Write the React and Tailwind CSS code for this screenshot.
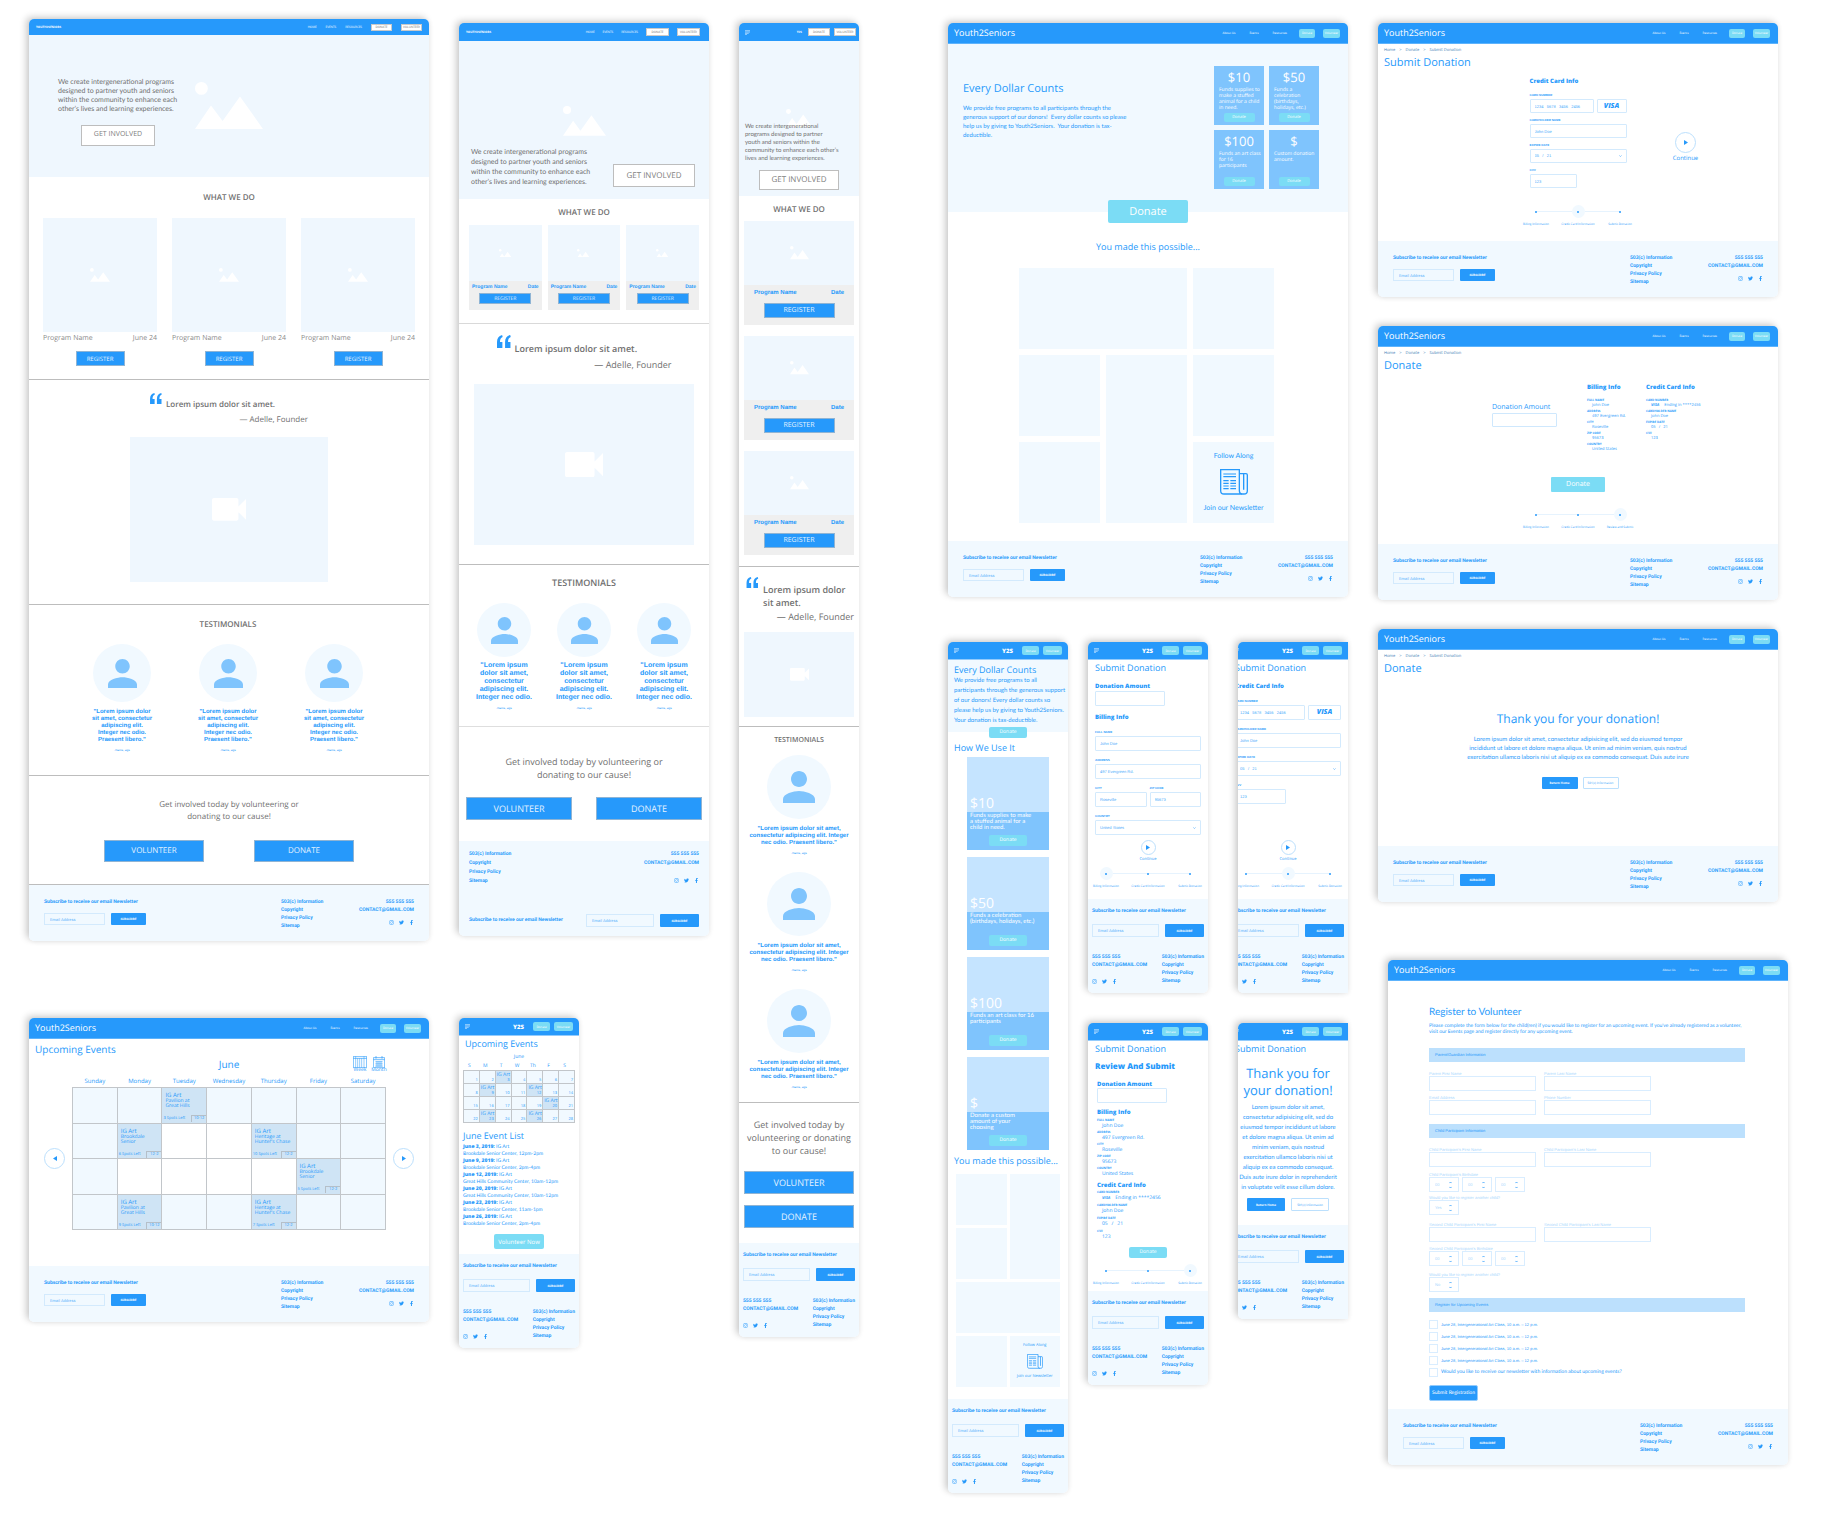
import React, { useId } from "react";
import { FaInstagram, FaTwitter, FaFacebookF } from "react-icons/fa";

/* ---------- icons ---------- */

function PictureIcon({ className }) {
  return (
    <svg viewBox="0 0 68 47" className={className} fill="#fff" aria-hidden="true">
      <circle cx="6.4" cy="6.4" r="6.4" />
      <path d="M0 47 16 23.5 27.6 39 45 14.5 68 47Z" />
    </svg>
  );
}

function VideoIcon({ className }) {
  return (
    <svg viewBox="3 6 18 12" className={className} fill="#fff" aria-hidden="true">
      <path d="M17 10.5V7c0-.55-.45-1-1-1H4c-.55 0-1 .45-1 1v10c0 .55.45 1 1 1h12c.55 0 1-.45 1-1v-3.500l4 4v-11l-4 4z" />
    </svg>
  );
}

function PersonIcon({ className }) {
  return (
    <svg viewBox="4 4 16 16" className={className} fill="#7fc4fd" aria-hidden="true">
      <path d="M12 12c2.210 0 4-1.790 4-4s-1.790-4-4-4-4 1.790-4 4 1.790 4 4 4zm0 2c-2.670 0-8 1.340-8 4v2h16v-2c0-2.660-5.330-4-8-4z" />
    </svg>
  );
}

function QuoteIcon({ className }) {
  return (
    <svg viewBox="0 0 26 24" className={className} fill="#2699fb" aria-hidden="true">
      <path d="M0 24V13C0 6 3 1.500 9.500 0L10.500 3.500C7 5 5.500 8 5.500 13H10V24Z" />
      <path d="M15 24V13C15 6 18 1.500 24.500 0L25.500 3.500C22 5 20.500 8 20.500 13H25V24Z" />
    </svg>
  );
}

function MenuIcon() {
  return (
    <svg viewBox="0 0 15 15" className="size-[5px]" stroke="#d4ebff" strokeWidth="2" aria-hidden="true">
      <path d="M0 2h15M0 6h15M0 10h11M0 14h6" />
    </svg>
  );
}

function NewsIcon({ className }) {
  return (
    <svg viewBox="0 0 84 78" className={className} fill="none" stroke="#2699fb" strokeWidth="4" aria-hidden="true">
      <path d="M2 2h56v62c0 6 3 11 8 11H12C6 75 2 71 2 65Z" />
      <path d="M58 14h20c2 0 4 2 4 4v47c0 6-4 10-10 10h-8M71 14v48" />
      <path d="M10 15h38M10 23h38M10 35h16M10 43h16M10 51h16M10 59h16M31 35h17M31 43h17M31 51h17M31 59h17" strokeWidth="3.500" />
    </svg>
  );
}

function WeekIcon() {
  return (
    <svg viewBox="0 0 42 36" className="h-[12px] w-[14px]" fill="none" stroke="#2699fb" strokeWidth="2" aria-hidden="true">
      <path d="M1 1h40v34H1ZM1 7h40" />
      <path d="M8 1v34M14 7v28M20 7v28M26 7v28M33 1v34" strokeWidth="1.500" />
    </svg>
  );
}

function MonthIcon() {
  return (
    <svg viewBox="0 0 36 36" className="size-[12px]" fill="none" stroke="#2699fb" strokeWidth="2" aria-hidden="true">
      <path d="M1 5h34v30H1ZM1 11h34M9 0v8M27 0v8" />
      <path d="M7 17h22M7 22h22M7 27h22M7 31h22M12 15v16M18 15v16M24 15v16" strokeWidth="1.500" />
    </svg>
  );
}

function Triangle({ back = false }) {
  return (
    <svg viewBox="0 0 8 10" className="h-[5px] w-[4px]" fill="#2699fb" aria-hidden="true">
      <path d={back ? "M8 0v10L0 5Z" : "M0 0v10L8 5Z"} />
    </svg>
  );
}

/* ---------- shared parts ---------- */

const body = "font-['Lato','Open_Sans',sans-serif] ";

function Board({ className = "", children, label }) {
  return (
    <article
      aria-label={label}
      className={
        "overflow-hidden rounded-[5px] bg-white shadow-[-3px_-2px_7px_rgba(0,0,0,0.2),1px_1px_5px_rgba(0,0,0,0.05)] " +
        className
      }
    >
      {children}
    </article>
  );
}

function HomeHeader({ wide }) {
  const button = wide ? "h-[7px] w-[21px]" : "h-[8px] w-[23px]";
  return (
    <header
      className={
        "flex items-center justify-between bg-[#2699fb] pl-[7px] text-[3px] leading-[4px] text-white " +
        (wide ? "h-[16px] pr-[7px]" : "h-[18px] pr-[9px]")
      }
    >
      <span className="font-bold">YOUTH2SENIORS</span>
      <nav className={"flex items-center " + (wide ? "gap-[9px]" : "gap-[8px]")}>
        <a href="#home">HOME</a>
        <a href="#events">EVENTS</a>
        <a href="#resources">RESOURCES</a>
        <button className={"border border-[#c9c9c9] bg-white leading-[4px] text-[#707070] " + button}>DONATE</button>
        <button className={"border border-[#c9c9c9] bg-white leading-[4px] text-[#707070] " + button}>VOLUNTEER</button>
      </nav>
    </header>
  );
}

function SiteHeader() {
  return (
    <header className="flex h-[21px] items-center justify-between border-b border-[#5db3fc] bg-[#2699fb] pr-[8px] pl-[6px] text-white">
      <span className="text-[9px] leading-[12px]">Youth2Seniors</span>
      <nav className="flex items-center text-[3px] leading-[4px]">
        <a href="#about" className="mr-[14px]">About Us</a>
        <a href="#events" className="mr-[14px]">Events</a>
        <a href="#resources" className="mr-[12px]">Resources</a>
        <button className="mr-[8px] h-[9px] w-[16px] rounded-[2px] bg-[#7bdcf5]">Donate</button>
        <button className="h-[9px] w-[17px] rounded-[2px] bg-[#7bdcf5]">Volunteer</button>
      </nav>
    </header>
  );
}

function MobileHeader() {
  return (
    <header className="flex h-[18px] items-center border-b border-[#93cbfc] bg-[#2699fb] px-[6px] text-white">
      <button aria-label="Menu"><MenuIcon /></button>
      <span className="mr-[9px] ml-auto text-[6px] leading-[8px] font-extrabold">Y2S</span>
      <button className="mr-[4px] h-[9px] w-[17px] rounded-[2px] bg-[#7bdcf5] text-[3px] leading-[4px]">Donate</button>
      <button className="h-[9px] w-[19px] rounded-[2px] bg-[#7bdcf5] text-[3px] leading-[4px]">Volunteer</button>
    </header>
  );
}

function Social({ className = "" }) {
  return (
    <div className={"flex gap-[5px] " + className}>
      <a href="#instagram" aria-label="Instagram"><FaInstagram className="size-[5px]" /></a>
      <a href="#twitter" aria-label="Twitter"><FaTwitter className="size-[5px]" /></a>
      <a href="#facebook" aria-label="Facebook"><FaFacebookF className="size-[5px]" /></a>
    </div>
  );
}

function FooterLinks() {
  return (
    <ul>
      <li><a href="#information">503(c) Information</a></li>
      <li><a href="#copyright">Copyright</a></li>
      <li><a href="#privacy">Privacy Policy</a></li>
      <li><a href="#sitemap">Sitemap</a></li>
    </ul>
  );
}

const footerFont = "bg-[#f1f9ff] font-['Roboto',sans-serif] text-[5px] font-bold whitespace-nowrap text-[#2699fb]";
const emailBox =
  "h-full min-w-0 border border-[#d3eafd] bg-transparent pl-[5px] font-['Roboto',sans-serif] text-[4px] font-normal placeholder:text-[#5db3fc] placeholder:opacity-100";
const subscribeButton = "h-full rounded-[1px] bg-[#2699fb] text-[3px] leading-[4px] text-white";

function WideFooter() {
  return (
    <footer className={"flex justify-between px-[15px] pt-[13px] pb-[11px] leading-[8px] " + footerFont}>
      <form>
        <h4>Subscribe to receive our email Newsletter</h4>
        <div className="mt-[7px] flex h-[12px] gap-[6px]">
          <input aria-label="Email Address" placeholder="Email Address" className={"w-[61px] " + emailBox} />
          <button type="button" className={"w-[35px] " + subscribeButton}>SUBSCRIBE</button>
        </div>
      </form>
      <div className="flex w-[133px] justify-between">
        <FooterLinks />
        <address className="text-right not-italic">
          555 555 555
          <br />
          CONTACT@GMAIL.COM
          <Social className="mt-[6px] justify-end" />
        </address>
      </div>
    </footer>
  );
}

function TabletFooter() {
  return (
    <footer className={"px-[10px] pt-[9px] pb-[9px] leading-[9px] " + footerFont}>
      <div className="flex justify-between">
        <FooterLinks />
        <address className="text-right not-italic">
          555 555 555
          <br />
          CONTACT@GMAIL.COM
          <Social className="mt-[10px] justify-end" />
        </address>
      </div>
      <form className="mt-[28px] flex h-[13px] items-center">
        <h4 className="mr-auto">Subscribe to receive our email Newsletter</h4>
        <input aria-label="Email Address" placeholder="Email Address" className={"mr-[6px] w-[68px] " + emailBox} />
        <button type="button" className={"w-[39px] " + subscribeButton}>SUBSCRIBE</button>
      </form>
    </footer>
  );
}

function MobileFooter() {
  return (
    <footer className={"px-[4px] pt-[8px] pb-[8px] leading-[8px] " + footerFont}>
      <form>
        <h4>Subscribe to receive our email Newsletter</h4>
        <div className="mt-[9px] flex h-[13px] gap-[6px]">
          <input aria-label="Email Address" placeholder="Email Address" className={"flex-1 " + emailBox} />
          <button type="button" className={"w-[39px] " + subscribeButton}>SUBSCRIBE</button>
        </div>
      </form>
      <div className="mt-[16px] flex justify-between">
        <address className="not-italic">
          555 555 555
          <br />
          CONTACT@GMAIL.COM
          <Social className="mt-[10px]" />
        </address>
        <FooterLinks />
      </div>
    </footer>
  );
}

/* ---------- home page ---------- */

const grayText = "text-[#707070]";
const outlineButton = "border border-[#bdbdbd] bg-white text-[#808080]";
const solidButton = "border border-[#8fb4d4] bg-[#2699fb] text-[#e3f2ff]";
const divider = "border-b border-[#bdbdbd]";

function Testimonial({ circle, children, textClass }) {
  return (
    <figure className="flex flex-col items-center text-center font-['Liberation_Sans',sans-serif] text-[#2699fb]">
      <div className={"flex items-center justify-center rounded-full bg-[#f1f9ff] " + circle}>
        <PersonIcon className="size-1/2" />
      </div>
      <blockquote className={"font-bold whitespace-nowrap " + textClass}>{children}</blockquote>
      <figcaption className="mt-[4px] text-[3px] leading-[4px]">-Name, age</figcaption>
    </figure>
  );
}

function HomeDesktop() {
  return (
    <Board label="Home, desktop" className={grayText}>
      <HomeHeader wide />
      <section className="grid h-[142px] bg-[#eff7fe]">
        <PictureIcon className="col-start-1 row-start-1 mt-[47px] w-[68px] justify-self-center" />
        <div className="col-start-1 row-start-1 ml-[29px] flex w-[120px] flex-col pt-[43px]">
          <p className={body + "text-[7px] leading-[9px] whitespace-nowrap"}>
            We create intergenerational programs
            <br />
            designed to partner youth and seniors
            <br />
            within the community to enhance each
            <br />
            other’s lives and learning experiences.
          </p>
          <button className={"mt-[11px] h-[21px] w-[74px] self-center text-[7px] " + outlineButton}>GET INVOLVED</button>
        </div>
      </section>
      <section className={"px-[14px] pt-[16px] pb-[13px] " + divider}>
        <h2 className="text-center text-[8px] leading-[10px] font-semibold">WHAT WE DO</h2>
        <div className="mt-[15px] grid grid-cols-3 gap-[15px]">
          {[1, 2, 3].map((n) => (
            <article key={n} className="flex flex-col">
              <div className="flex aspect-square items-center justify-center bg-[#eff7fe]">
                <PictureIcon className="w-[20px]" />
              </div>
              <p className="mt-[3px] flex justify-between text-[7px] leading-[8px] text-[#8c8c8c]">
                <span>Program Name</span>
                <span>June 24</span>
              </p>
              <button className={"mt-[8px] h-[15px] w-[49px] self-center text-[6px] leading-[8px] " + solidButton}>REGISTER</button>
            </article>
          ))}
        </div>
      </section>
      <section className={"flex flex-col items-center pt-[13px] pb-[22px] " + divider}>
        <div className="w-[158px]">
          <div className="flex gap-[4px]">
            <QuoteIcon className="h-[11px] w-[12px]" />
            <blockquote className="mt-[6px] text-[8px] leading-[12px] font-semibold whitespace-nowrap">Lorem ipsum dolor sit amet.</blockquote>
          </div>
          <p className="mt-[4px] text-right text-[8px] leading-[10px]">— Adelle, Founder</p>
        </div>
        <div className="mt-[12px] flex h-[145px] w-[198px] items-center justify-center bg-[#eff7fe]">
          <VideoIcon className="w-[34px]" />
        </div>
      </section>
      <section className={"pt-[15px] pr-[42px] pb-[23px] pl-[40px] " + divider}>
        <h2 className="text-center text-[8px] leading-[10px] font-semibold">TESTIMONIALS</h2>
        <div className="mt-[14px] grid grid-cols-3">
          {[1, 2, 3].map((n) => (
            <Testimonial key={n} circle="size-[58px]" textClass="mt-[7px] text-[6px] leading-[7px]">
              "Lorem ipsum dolor
              <br />
              sit amet, consectetur
              <br />
              adipiscing elit.
              <br />
              Integer nec odio.
              <br />
              Praesent libero."
            </Testimonial>
          ))}
        </div>
      </section>
      <section className={"pt-[23px] pb-[22px] text-center text-[8px] " + divider}>
        <p className="leading-[12px]">
          Get involved today by volunteering or
          <br />
          donating to our cause!
        </p>
        <div className="mt-[17px] flex justify-center gap-[50px]">
          <button className={"h-[22px] w-[100px] " + solidButton}>VOLUNTEER</button>
          <button className={"h-[22px] w-[100px] " + solidButton}>DONATE</button>
        </div>
      </section>
      <WideFooter />
    </Board>
  );
}

function HomeTablet() {
  return (
    <Board label="Home, tablet" className={grayText}>
      <HomeHeader />
      <section className="grid h-[158px] bg-[#eff7fe]">
        <PictureIcon className="col-start-1 row-start-1 mt-[65px] w-[43px] justify-self-center" />
        <div className="col-start-1 row-start-1 flex items-start justify-between pt-[106px] pr-[14px] pl-[12px]">
          <p className={body + "text-[7px] leading-[10px] whitespace-nowrap"}>
            We create intergenerational programs
            <br />
            designed to partner youth and seniors
            <br />
            within the community to enhance each
            <br />
            other’s lives and learning experiences.
          </p>
          <button className={"mt-[17px] h-[23px] w-[82px] shrink-0 text-[8px] " + outlineButton}>GET INVOLVED</button>
        </div>
      </section>
      <section className="border-b border-[#d9d9d9] px-[10px] pt-[9px] pb-[13px]">
        <h2 className="text-center text-[8px] leading-[10px] font-semibold">WHAT WE DO</h2>
        <div className="mt-[7px] grid grid-cols-3 gap-[6px]">
          {[1, 2, 3].map((n) => (
            <article key={n} className="flex flex-col bg-[#efefef]">
              <div className="flex h-[56px] items-center justify-center bg-[#eff7fe]">
                <PictureIcon className="w-[13px]" />
              </div>
              <p className="mx-[3px] mt-[2px] flex justify-between font-['Liberation_Sans',sans-serif] text-[5px] leading-[8px] font-bold text-[#2699fb]">
                <span>Program Name</span>
                <span>Date</span>
              </p>
              <button className={"mt-[2px] mb-[6px] h-[11px] w-[52px] self-center text-[5px] leading-[8px] " + solidButton}>REGISTER</button>
            </article>
          ))}
        </div>
      </section>
      <section className={"px-[15px] pt-[11px] pb-[19px] " + divider}>
        <div className="mx-auto w-[175px]">
          <div className="flex gap-[4px]">
            <QuoteIcon className="h-[13px] w-[14px]" />
            <blockquote className="mt-[7px] text-[9px] leading-[13px] font-semibold whitespace-nowrap">Lorem ipsum dolor sit amet.</blockquote>
          </div>
          <p className="mt-[4px] text-right text-[9px] leading-[12px]">— Adelle, Founder</p>
        </div>
        <div className="mt-[13px] flex h-[161px] items-center justify-center bg-[#eff7fe]">
          <VideoIcon className="w-[38px]" />
        </div>
      </section>
      <section className="border-b border-[#dedede] px-[5px] pt-[12px] pb-[16px]">
        <h2 className="text-center text-[9px] leading-[12px] font-semibold">TESTIMONIALS</h2>
        <div className="mt-[14px] grid grid-cols-3">
          {[1, 2, 3].map((n) => (
            <Testimonial key={n} circle="size-[54px]" textClass="mt-[5px] text-[7px] leading-[8px]">
              "Lorem ipsum
              <br />
              dolor sit amet,
              <br />
              consectetur
              <br />
              adipiscing elit.
              <br />
              Integer nec odio.
            </Testimonial>
          ))}
        </div>
      </section>
      <section className="px-[7px] pt-[28px] pb-[21px] text-center text-[9px]">
        <p className="leading-[13px]">
          Get involved today by volunteering or
          <br />
          donating to our cause!
        </p>
        <div className="mt-[16px] flex justify-between">
          <button className={"h-[23px] w-[106px] " + solidButton}>VOLUNTEER</button>
          <button className={"h-[23px] w-[106px] " + solidButton}>DONATE</button>
        </div>
      </section>
      <TabletFooter />
    </Board>
  );
}

function HomeMobile() {
  return (
    <Board label="Home, mobile" className={grayText}>
      <header className="flex h-[18px] items-center bg-[#2699fb] pr-[3px] pl-[6px] text-[3px] leading-[4px] text-white">
        <button aria-label="Menu"><MenuIcon /></button>
        <span className="mr-[6px] ml-auto font-bold">Y2S</span>
        <button className="mr-[4px] h-[8px] w-[22px] border border-[#c9c9c9] bg-white text-[#707070]">DONATE</button>
        <button className="h-[8px] w-[22px] border border-[#c9c9c9] bg-white text-[#707070]">VOLUNTEER</button>
      </header>
      <section className="grid h-[155px] bg-[#eff7fe]">
        <PictureIcon className="col-start-1 row-start-1 mt-[68px] w-[26px] justify-self-center" />
        <div className="col-start-1 row-start-1 flex flex-col px-[6px] pt-[82px]">
          <p className={body + "text-[6px] leading-[8px] whitespace-nowrap"}>
            We create intergenerational
            <br />
            programs designed to partner
            <br />
            youth and seniors within the
            <br />
            community to enhance each other’s
            <br />
            lives and learning experiences.
          </p>
          <button className={"mt-[7px] h-[20px] w-[80px] self-center text-[8px] " + outlineButton}>GET INVOLVED</button>
        </div>
      </section>
      <section className={"px-[5px] pt-[9px] pb-[11px] " + divider}>
        <h2 className="text-center text-[8px] leading-[10px] font-semibold">WHAT WE DO</h2>
        <div className="mt-[6px] flex flex-col gap-[11px]">
          {[1, 2, 3].map((n) => (
            <article key={n} className="flex flex-col bg-[#efefef]">
              <div className="flex h-[64px] items-center justify-center bg-[#eff7fe]">
                <PictureIcon className="w-[19px]" />
              </div>
              <p className="mx-[10px] mt-[4px] flex justify-between font-['Liberation_Sans',sans-serif] text-[6px] leading-[8px] font-bold text-[#2699fb]">
                <span>Program Name</span>
                <span>Date</span>
              </p>
              <button className={"mt-[6px] mb-[7px] h-[15px] w-[71px] self-center text-[7px] leading-[8px] " + solidButton}>REGISTER</button>
            </article>
          ))}
        </div>
      </section>
      <section className={"px-[5px] pt-[10px] pb-[9px] " + divider}>
        <div className="flex gap-[4px] pl-[2px]">
          <QuoteIcon className="h-[11px] w-[13px]" />
          <blockquote className="mt-[6px] text-[9px] leading-[13px] font-semibold whitespace-nowrap">
            Lorem ipsum dolor
            <br />
            sit amet.
          </blockquote>
        </div>
        <p className="mt-[2px] text-right text-[9px] leading-[11px]">— Adelle, Founder</p>
        <div className="mt-[10px] flex h-[85px] items-center justify-center bg-[#eff7fe]">
          <VideoIcon className="w-[19px]" />
        </div>
      </section>
      <section className={"pt-[10px] pb-[13px] " + divider}>
        <h2 className="text-center text-[7px] leading-[8px] font-semibold">TESTIMONIALS</h2>
        <div className="mt-[10px] flex flex-col gap-[17px]">
          {[1, 2, 3].map((n) => (
            <Testimonial key={n} circle="size-[64px]" textClass="mt-[7px] text-[6px] leading-[7px]">
              "Lorem ipsum dolor sit amet,
              <br />
              consectetur adipiscing elit. Integer
              <br />
              nec odio. Praesent libero."
            </Testimonial>
          ))}
        </div>
      </section>
      <section className="px-[5px] pt-[15px] pb-[15px] text-center text-[9px]">
        <p className="leading-[13px] whitespace-nowrap">
          Get involved today by
          <br />
          volunteering or donating
          <br />
          to our cause!
        </p>
        <button className={"mt-[14px] h-[23px] w-full " + solidButton}>VOLUNTEER</button>
        <button className={"mt-[11px] h-[23px] w-full " + solidButton}>DONATE</button>
      </section>
      <MobileFooter />
    </Board>
  );
}

/* ---------- events ---------- */

const eventsByDay = {
  3: { place: ["Pavilion at", "Great Hills"], spots: 3, time: "10-12" },
  9: { place: ["Brookdale", "Senior"], spots: 6, time: "12-2" },
  12: { place: ["Heritage at", "Hunter's Chase"], spots: 10, time: "12-2" },
  20: { place: ["Brookdale", "Senior"], spots: 5, time: "12-2" },
  23: { place: ["Pavilion at", "Great Hills"], spots: 9, time: "10-12" },
  26: { place: ["Heritage at", "Hunter's Chase"], spots: 7, time: "12-2" },
};
const plainDays = [10, 11, 16, 17, 18, 19];
const weeks = [0, 7, 14, 21].map((start) => [1, 2, 3, 4, 5, 6, 7].map((n) => start + n));

function EventsDesktop() {
  return (
    <Board label="Upcoming events, desktop" className="text-[#2699fb]">
      <SiteHeader />
      <main className="pt-[4px] pb-[36px]">
        <h1 className="pl-[6px] text-[10px] leading-[13px]">Upcoming Events</h1>
        <div className="grid grid-cols-3 items-start pr-[43px] pl-[43px]">
          <h2 className="col-start-2 pt-[2px] text-center text-[10px] leading-[12px]">June</h2>
          <div className="flex justify-end gap-[5px] text-[5px] leading-[5px]">
            <button className="flex w-[14px] flex-col items-center"><WeekIcon />Week</button>
            <button className="flex w-[14px] flex-col items-center"><MonthIcon />Month</button>
          </div>
        </div>
        <div className="mt-[3px] flex items-center justify-between gap-[7px] px-[15px]">
          <button aria-label="Previous month" className="mt-[11px] flex size-[21px] shrink-0 items-center justify-center rounded-full border border-[#bce0fd]">
            <Triangle back />
          </button>
          <table className="flex-1 table-fixed border-collapse">
            <thead>
              <tr className="text-[6px] leading-[11px]">
                {["Sunday", "Monday", "Tuesday", "Wednesday", "Thursday", "Friday", "Saturday"].map((d) => (
                  <th key={d} className="w-[14%] p-0 font-normal">{d}</th>
                ))}
              </tr>
            </thead>
            <tbody>
              {weeks.map((week) => (
                <tr key={week[0]} className="h-[36px] even:h-[35px]">
                  {week.map((day) => {
                    const event = eventsByDay[day];
                    const tone = event ? "bg-[#cfe4f5]" : plainDays.includes(day) ? "bg-white" : "bg-[#f1f9ff]";
                    return (
                      <td key={day} className={"border border-[#c2c6ca] p-0 align-top " + tone}>
                        {event && (
                          <div className="flex h-[34px] flex-col">
                            <p className="pt-[3px] pl-[3px] text-[6px] leading-[8px]">IG Art</p>
                            <p className="pl-[3px] text-[5px] leading-[5px] whitespace-nowrap">
                              {event.place[0]}
                              <br />
                              {event.place[1]}
                            </p>
                            <p className="mt-auto flex h-[7px] items-center justify-between pl-px text-[4px] leading-[6px] whitespace-nowrap">
                              <span>{event.spots} Spots Left</span>
                              <span className="h-[7px] w-[15px] border-t border-l border-[#b5bfc8] text-center">{event.time}</span>
                            </p>
                          </div>
                        )}
                      </td>
                    );
                  })}
                </tr>
              ))}
            </tbody>
          </table>
          <button aria-label="Next month" className="mt-[11px] flex size-[21px] shrink-0 items-center justify-center rounded-full border border-[#bce0fd]">
            <Triangle />
          </button>
        </div>
      </main>
      <WideFooter />
    </Board>
  );
}

const eventList = [
  ["June 3, 2019:", "Brookdale Senior Center, 12pm-2pm"],
  ["June 9, 2019:", "Brookdale Senior Center, 2pm-4pm"],
  ["June 12, 2019:", "Great Hills Community Center, 10am-12pm"],
  ["June 20, 2019:", "Great Hills Community Center, 10am-12pm"],
  ["June 23, 2019:", "Brookdale Senior Center, 11am-1pm"],
  ["June 26, 2019:", "Brookdale Senior Center, 2pm-4pm"],
];

function EventsMobile() {
  return (
    <Board label="Upcoming events, mobile" className="w-[48%] text-[#2699fb]">
      <MobileHeader />
      <main className="flex flex-col px-[4px] pt-[2px] pb-[5px]">
        <h1 className="pl-[2px] text-[9px] leading-[12px]">Upcoming Events</h1>
        <h2 className="mt-[4px] text-center text-[5px] leading-[6px]">June</h2>
        <table className="mt-[3px] w-full table-fixed border-collapse">
          <thead>
            <tr className="text-[5px] leading-[7px]">
              {["S", "M", "T", "W", "Th", "F", "S"].map((d, i) => (
                <th key={i} className="p-0 pr-[4px] font-normal">{d}</th>
              ))}
            </tr>
          </thead>
          <tbody>
            {weeks.map((week) => (
              <tr key={week[0]}>
                {week.map((day) => (
                  <td
                    key={day}
                    className={
                      "border border-[#c2c6ca] p-0 align-bottom " + (eventsByDay[day] ? "bg-[#cfe4f5]" : "bg-[#f1f9ff]")
                    }
                  >
                    <p className="h-[7px] pl-px text-[5px] leading-[8px] whitespace-nowrap">{eventsByDay[day] && "IG Art"}</p>
                    <p className="h-[5px] pr-px text-right text-[4px] leading-[5px]">{day}</p>
                  </td>
                ))}
              </tr>
            ))}
          </tbody>
        </table>
        <h2 className="mt-[7px] text-[9px] leading-[12px]">June Event List</h2>
        <ul className={body + "mt-[2px] text-[5px] leading-[7px] whitespace-nowrap"}>
          {eventList.map(([date, place]) => (
            <li key={date}>
              <b className="font-['Open_Sans',sans-serif] font-extrabold">{date}</b> IG Art
              <br />
              {place}
            </li>
          ))}
        </ul>
        <button className="mt-[6px] h-[15px] w-[50px] self-center rounded-[2px] bg-[#7bdcf5] text-[6px] leading-[8px] whitespace-nowrap text-white">Volunteer Now</button>
      </main>
      <MobileFooter />
    </Board>
  );
}

/* ---------- donate ---------- */

const gifts = [
  { amount: "$10", wide: ["Funds supplies to", "make a stuffed", "animal for a child", "in need."], narrow: ["Funds supplies to make", "a stuffed animal for a", "child in need."] },
  { amount: "$50", wide: ["Funds a", "celebration", "(birthdays,", "holidays, etc.)"], narrow: ["Funds a celebration", "(birthdays, holidays, etc.)"] },
  { amount: "$100", wide: ["Funds an art class", "for 16", "participants"], narrow: ["Funds an art class for 16", "participants"] },
  { amount: "$", wide: ["Custom donation", "amount."], narrow: ["Donate a custom", "amount of your", "choosing"] },
];

function Lines({ lines }) {
  return lines.map((line) => (
    <span key={line} className="block whitespace-nowrap">{line}</span>
  ));
}

function DonateDesktop() {
  return (
    <Board label="Donate, desktop" className="text-[#2699fb]">
      <SiteHeader />
      <main className="flex flex-col pb-[18px]">
        <section className="flex h-[168px] items-start justify-between bg-[#f1f9ff] pr-[29px] pl-[15px]">
          <div className="pt-[38px]">
            <h1 className="text-[11px] leading-[14px]">Every Dollar Counts</h1>
            <p className={body + "mt-[8px] text-[6px] leading-[9px] whitespace-nowrap"}>
              We provide free programs to all participants through the
              <br />
              generous support of our donors!&nbsp; Every dollar counts so please
              <br />
              help us by giving to Youth2Seniors.&nbsp; Your donation is tax-
              <br />
              deductible.
            </p>
          </div>
          <div className="grid grid-cols-[50px_50px] gap-[5px] pt-[22px] text-white">
            {gifts.map((gift) => (
              <article key={gift.amount} className="flex h-[59px] flex-col bg-[#7fc4fd] pt-[3px] pb-[3px] pl-[5px]">
                <h3 className="pr-[5px] text-center text-[13px] leading-[16px]">{gift.amount}</h3>
                <p className="mt-[2px] text-[5px] leading-[6px]"><Lines lines={gift.wide} /></p>
                <button className="mt-auto mr-[5px] h-[9px] w-[31px] shrink-0 self-center rounded-[2px] bg-[#7bdcf5] text-[4px] leading-[6px]">Donate</button>
              </article>
            ))}
          </div>
        </section>
        <button className="-mt-[12px] h-[23px] w-[80px] self-center rounded-[2px] bg-[#7bdcf5] text-[11px] leading-[14px] text-white">Donate</button>
        <h2 className="mt-[17px] text-center text-[9px] leading-[14px]">You made this possible...</h2>
        <div className="mt-[14px] mr-[74px] ml-[71px] grid auto-rows-[81px] grid-cols-3 gap-[6px]">
          <div className="col-span-2 bg-[#f1f9ff]" />
          <div className="bg-[#f1f9ff]" />
          <div className="bg-[#f1f9ff]" />
          <div className="row-span-2 bg-[#f1f9ff]" />
          <div className="bg-[#f1f9ff]" />
          <div className="bg-[#f1f9ff]" />
          <a href="#newsletter" className={body + "flex flex-col items-center justify-between bg-[#f1f9ff] pt-[9px] pb-[10px] text-[7px] leading-[10px] whitespace-nowrap"}>
            Follow Along
            <NewsIcon className="w-[28px]" />
            Join our Newsletter
          </a>
        </div>
      </main>
      <WideFooter />
    </Board>
  );
}

function DonateMobile() {
  return (
    <Board label="Donate, mobile" className="text-[#2699fb]">
      <MobileHeader />
      <main className="flex flex-col pb-[12px]">
        <section className="bg-[#f1f9ff] px-[6px] pt-[4px] pb-[6px]">
          <h1 className="text-[9px] leading-[12px] whitespace-nowrap">Every Dollar Counts</h1>
          <p className={body + "text-[6px] leading-[10px] whitespace-nowrap"}>
            We provide free programs to all
            <br />
            participants through the generous support
            <br />
            of our donors! Every dollar counts so
            <br />
            please help us by giving to Youth2Seniors.
            <br />
            Your donation is tax-deductible.
          </p>
        </section>
        <button className="-mt-[5px] h-[11px] w-[38px] self-center rounded-[2px] bg-[#7bdcf5] text-[5px] leading-[7px] text-white">Donate</button>
        <h2 className="mt-[4px] pl-[6px] text-[9px] leading-[12px]">How We Use It</h2>
        <div className="mx-[19px] mt-[3px] flex flex-col gap-[7px] text-white">
          {gifts.map((gift) => (
            <article key={gift.amount}>
              <h3 className="flex h-[55px] items-end bg-[#c5e4ff] pl-[3px] text-[14px] leading-[17px]">{gift.amount}</h3>
              <div className="flex h-[38px] flex-col bg-[#7fc4fd] pt-px pb-[4px] pl-[3px]">
                <p className={body + "text-[6px] leading-[6px]"}><Lines lines={gift.narrow} /></p>
                <button className="mt-auto mr-[3px] h-[11px] w-[38px] self-center rounded-[2px] bg-[#7bdcf5] text-[5px] leading-[7px]">Donate</button>
              </div>
            </article>
          ))}
        </div>
        <h2 className="mt-[5px] pl-[6px] text-[9px] leading-[12px] whitespace-nowrap">You made this possible...</h2>
        <div className="mx-[8px] mt-[7px] grid auto-rows-[51px] grid-cols-2 gap-[3px]">
          <div className="bg-[#f1f9ff]" />
          <div className="row-span-2 bg-[#f1f9ff]" />
          <div className="bg-[#f1f9ff]" />
          <div className="col-span-2 bg-[#f1f9ff]" />
          <div className="bg-[#f1f9ff]" />
          <a href="#newsletter" className="flex flex-col items-center justify-between bg-[#f1f9ff] py-[7px] text-[4px] leading-[6px] whitespace-nowrap">
            Follow Along
            <NewsIcon className="w-[16px]" />
            Join our Newsletter
          </a>
        </div>
      </main>
      <MobileFooter />
    </Board>
  );
}

/* ---------- donation form ---------- */

const boxClass =
  "w-full rounded-[1px] border border-[#d3eafd] bg-white pl-[4px] font-['Liberation_Sans',sans-serif] text-[4px] text-[#4aabfb]";
const chevron = (
  <svg viewBox="0 0 8 5" className="h-[2px] w-[3px]" fill="none" stroke="#2699fb" strokeWidth="1.500" aria-hidden="true">
    <path d="M1 1l3 3 3-3" />
  </svg>
);

function Field({ label, value, height, className = "", select = false, children }) {
  const id = useId();
  return (
    <div className={"min-w-0 " + className}>
      <label htmlFor={id} className="mb-[2px] block font-['Liberation_Sans',sans-serif] text-[3px] leading-[4px] font-bold uppercase">
        {label}
      </label>
      {select ? (
        <div className={"flex items-center pr-[4px] " + boxClass + " " + height}>
          <select id={id} className="w-full appearance-none bg-transparent">
            <option>{value}</option>
          </select>
          {chevron}
        </div>
      ) : (
        <div className={"flex gap-[3px] " + height}>
          <input id={id} defaultValue={value} className={"h-full min-w-0 " + boxClass} />
          {children}
        </div>
      )}
    </div>
  );
}

function Visa({ className }) {
  return (
    <span className={"flex shrink-0 items-center justify-center rounded-[1px] border border-[#d3eafd] text-[7px] leading-[9px] font-extrabold italic " + className}>
      VISA
    </span>
  );
}

function Stepper({ active, last = "Submit Donation" }) {
  const steps = ["Billing Information", "Credit Card Information", last];
  return (
    <ol className="mx-[-3px] flex justify-center text-[3px] leading-[4px]">
      {steps.map((step, i) => (
        <li key={step} className="flex w-[42px] flex-col items-center">
          <div className="flex h-[13px] w-full items-center">
            <span className={"h-px flex-1 " + (i > 0 ? "bg-[#e6f3fe]" : "")} />
            <span className={"flex items-center justify-center rounded-full " + (i === active ? "size-[13px] bg-[#f1f9ff]" : "size-[2px]")}>
              <span className="size-[2px] rounded-full bg-[#2699fb]" />
            </span>
            <span className={"h-px flex-1 " + (i < 2 ? "bg-[#e6f3fe]" : "")} />
          </div>
          <span className="mt-[4px] whitespace-nowrap">{step}</span>
        </li>
      ))}
    </ol>
  );
}

function Breadcrumbs({ title }) {
  return (
    <div className="pt-[4px] pl-[6px]">
      <nav aria-label="Breadcrumb" className="flex gap-[4px] text-[4px] leading-[6px] text-[#3c7ab3]">
        <a href="#home">Home</a>
        <span>&gt;</span>
        <a href="#donate">Donate</a>
        <span>&gt;</span>
        <a href="#submit">Submit Donation</a>
      </nav>
      <h1 className="mt-[2px] text-[11px] leading-[14px]">{title}</h1>
    </div>
  );
}

function CardFields({ height, gap, visa, short }) {
  return (
    <div className={"flex flex-col " + gap}>
      <Field label="Card number" value={"1234\u00a0\u00a0 5678\u00a0\u00a0 3456\u00a0\u00a0 2456"} height={height}>
        <Visa className={visa} />
      </Field>
      <Field label="Cardholder name" value="John Doe" height={height} />
      <Field label="Expire date" value={"05\u00a0\u00a0 /\u00a0\u00a0 21"} height={height} select />
      <Field label="CVV" value="123" height={height} className={short} />
    </div>
  );
}

function SubmitDonationDesktop() {
  return (
    <Board label="Submit donation, desktop" className="text-[#2699fb]">
      <SiteHeader />
      <main className="pb-[15px]">
        <Breadcrumbs title="Submit Donation" />
        <form className="mt-[7px] mb-[17px] grid grid-cols-[1fr_97px_1fr] items-start">
          <div className="col-start-2">
            <h2 className="mb-[8px] text-[6px] leading-[8px] font-extrabold">Credit Card Info</h2>
            <CardFields height="h-[14px]" gap="gap-[5px]" visa="w-[30px]" short="w-[47px]" />
          </div>
          <button type="button" className="mt-[55px] ml-[47px] flex w-[24px] flex-col items-center gap-px text-[6px] leading-[8px]">
            <span className="flex size-[21px] items-center justify-center rounded-full border border-[#bce0fd]"><Triangle /></span>
            Continue
          </button>
        </form>
        <Stepper active={1} />
      </main>
      <WideFooter />
    </Board>
  );
}

function Facts({ items, gap = "", value }) {
  return (
    <dl className={"flex flex-col whitespace-nowrap " + gap}>
      {items.map(([name, text]) => (
        <div key={name}>
          <dt className="text-[3px] leading-[5px] font-bold uppercase">{name}</dt>
          <dd className={"pl-[5px] " + value}>{text}</dd>
        </div>
      ))}
    </dl>
  );
}

const billing = [
  ["Full name", "John Doe"],
  ["Address", "497 Evergreen Rd."],
  ["City", "Roseville"],
  ["Zip code", "95673"],
  ["Country", "United States"],
];
const card = [
  ["Card number", <><b className="mr-[5px] text-[4px] italic">VISA</b>Ending in ****2456</>],
  ["Cardholder name", "John Doe"],
  ["Expire date", "05\u00a0\u00a0 /\u00a0\u00a0 21"],
  ["CVV", "123"],
];

function ReviewDesktop() {
  return (
    <Board label="Review donation, desktop" className="text-[#2699fb]">
      <SiteHeader />
      <main className="flex flex-col pb-[15px]">
        <Breadcrumbs title="Donate" />
        <div className="mt-[10px] flex items-start pl-[114px]">
          <label className="mt-[20px] mr-[30px] block w-[65px] text-[7px] leading-[10px] whitespace-nowrap">
            Donation Amount
            <input className="block h-[14px] w-full rounded-[1px] border border-[#cfe8fd]" />
          </label>
          <section className="w-[59px]">
            <h2 className="mb-[7px] text-[6px] leading-[8px] font-extrabold">Billing Info</h2>
            <Facts items={billing} value="text-[4px] leading-[6px]" />
          </section>
          <section>
            <h2 className="mb-[7px] text-[6px] leading-[8px] font-extrabold">Credit Card Info</h2>
            <Facts items={card} value="text-[4px] leading-[6px]" />
          </section>
        </div>
        <button className="mt-[24px] mb-[16px] h-[15px] w-[54px] self-center rounded-[1px] bg-[#7bdcf5] text-[7px] leading-[10px] text-white">Donate</button>
        <Stepper active={2} last="Review and Submit" />
      </main>
      <WideFooter />
    </Board>
  );
}

function ThanksDesktop() {
  return (
    <Board label="Thank you, desktop" className="text-[#2699fb]">
      <SiteHeader />
      <main className="pb-[57px]">
        <Breadcrumbs title="Donate" />
        <h2 className="mt-[35px] text-center text-[12px] leading-[16px]">Thank you for your donation!</h2>
        <p className={body + "mt-[8px] text-center text-[6px] leading-[9px]"}>
          Lorem ipsum dolor sit amet, consectetur adipisicing elit, sed do eiusmod tempor
          <br />
          incididunt ut labore et dolore magna aliqua. Ut enim ad minim veniam, quis nostrud
          <br />
          exercitation ullamco laboris nisi ut aliquip ex ea commodo consequat. Duis aute irure
        </p>
        <div className="mt-[15px] flex h-[12px] justify-center gap-[5px] pl-[4px] text-[3px] leading-[4px]">
          <button className="w-[36px] rounded-[1px] bg-[#2699fb] font-bold text-white">Return Home</button>
          <button className="w-[36px] rounded-[1px] border border-[#bce0fd]">501(c) Information</button>
        </div>
      </main>
      <WideFooter />
    </Board>
  );
}

const mobileTitle = "text-[9px] leading-[12px] whitespace-nowrap";

function Continue() {
  return (
    <button type="button" className="mb-[5px] flex flex-col items-center gap-[2px] self-center text-[4px] leading-[5px]">
      <span className="flex size-[15px] items-center justify-center rounded-full border border-[#bce0fd]"><Triangle /></span>
      Continue
    </button>
  );
}

function BillingMobile() {
  return (
    <Board label="Submit donation, mobile" className="text-[#2699fb]">
      <MobileHeader />
      <main className="flex flex-col pt-[2px] pb-[11px]">
        <form className="flex flex-col px-[7px]">
          <h1 className={mobileTitle}>Submit Donation</h1>
          <label className="mt-[8px] block w-[70px] text-[6px] leading-[8px] font-extrabold">
            Donation Amount
            <input className="mt-px block h-[15px] w-full rounded-[1px] border border-[#d3eafd]" />
          </label>
          <h2 className="mt-[7px] text-[6px] leading-[8px] font-extrabold">Billing Info</h2>
          <div className="mt-[9px] mb-[5px] grid grid-cols-2 gap-x-[3px] gap-y-[7px]">
            <Field label="Full name" value="John Doe" height="h-[15px]" className="col-span-2" />
            <Field label="Address" value="497 Evergreen Rd." height="h-[15px]" className="col-span-2" />
            <Field label="City" value="Roseville" height="h-[15px]" />
            <Field label="Zip code" value="95673" height="h-[15px]" />
            <Field label="Country" value="United States" height="h-[15px]" className="col-span-2" select />
          </div>
          <Continue />
        </form>
        <Stepper active={0} />
      </main>
      <MobileFooter />
    </Board>
  );
}

function CardMobile() {
  return (
    <Board label="Credit card, mobile" className="flex justify-end rounded-r-none text-[#2699fb]">
      <div className="w-[109%] shrink-0">
        <MobileHeader />
        <main className="flex flex-col pt-[2px] pb-[11px]">
          <form className="flex flex-col px-[7px]">
            <h1 className={mobileTitle}>Submit Donation</h1>
            <h2 className="mt-[8px] mb-[9px] text-[6px] leading-[8px] font-extrabold">Credit Card Info</h2>
            <CardFields height="h-[15px]" gap="gap-[7px] mb-[36px]" visa="w-[33px]" short="w-[51px]" />
            <Continue />
          </form>
          <Stepper active={1} />
        </main>
        <MobileFooter />
      </div>
    </Board>
  );
}

function ReviewMobile() {
  return (
    <Board label="Review and submit, mobile" className="text-[#2699fb]">
      <MobileHeader />
      <main className="flex flex-col pt-[2px] pb-[6px]">
        <div className="flex flex-col px-[7px]">
          <h1 className={mobileTitle}>Submit Donation</h1>
          <h2 className="mt-[7px] text-[8px] leading-[10px] font-extrabold">Review And Submit</h2>
          <label className="mt-[8px] ml-[2px] block w-[70px] text-[6px] leading-[8px] font-extrabold">
            Donation Amount
            <input className="block h-[15px] w-full rounded-[1px] border border-[#d3eafd]" />
          </label>
          <section className="mt-[5px] ml-[2px]">
            <h3 className="mb-[2px] text-[6px] leading-[8px] font-extrabold">Billing Info</h3>
            <Facts items={billing} value="text-[5px] leading-[7px]" />
          </section>
          <section className="mt-[3px] ml-[2px]">
            <h3 className="mb-px text-[6px] leading-[8px] font-extrabold">Credit Card Info</h3>
            <Facts items={card} gap="gap-px" value="text-[5px] leading-[7px]" />
          </section>
          <button className="mt-[6px] mb-[6px] h-[11px] w-[38px] self-center rounded-[2px] bg-[#7bdcf5] text-[5px] leading-[7px] text-white">Donate</button>
        </div>
        <Stepper active={2} />
      </main>
      <MobileFooter />
    </Board>
  );
}

function ThanksMobile() {
  return (
    <Board label="Thank you, mobile" className="flex justify-end rounded-r-none text-[#2699fb]">
      <div className="w-[109%] shrink-0">
        <MobileHeader />
        <main className="px-[7px] pt-[2px] pb-[14px]">
          <h1 className={mobileTitle}>Submit Donation</h1>
          <h2 className="mt-[10px] text-center text-[13px] leading-[17px] whitespace-nowrap">
            Thank you for
            <br />
            your donation!
          </h2>
          <p className={body + "mx-[-6px] mt-[4px] text-center text-[6px] leading-[10px] whitespace-nowrap"}>
            Lorem ipsum dolor sit amet,
            <br />
            consectetur adipisicing elit, sed do
            <br />
            eiusmod tempor incididunt ut labore
            <br />
            et dolore magna aliqua. Ut enim ad
            <br />
            minim veniam, quis nostrud
            <br />
            exercitation ullamco laboris nisi ut
            <br />
            aliquip ex ea commodo consequat.
            <br />
            Duis aute irure dolor in reprehenderit
            <br />
            in voluptate velit esse cillum dolore.
          </p>
          <div className="mt-[5px] flex h-[13px] justify-center gap-[6px] text-[3px] leading-[4px]">
            <button className="w-[38px] rounded-[1px] bg-[#2699fb] font-bold text-white">Return Home</button>
            <button className="w-[38px] rounded-[1px] border border-[#bce0fd]">501(c) Information</button>
          </div>
        </main>
        <MobileFooter />
      </div>
    </Board>
  );
}

/* ---------- volunteer registration ---------- */

const paleBox = "border border-[#d9edff] bg-white";

function Pair({ labels, className = "" }) {
  return (
    <div className={"flex gap-[8px] " + className}>
      {labels.map((text) => (
        <label key={text} className="block w-[107px]">
          {text}
          <input className={"block h-[15px] w-full pl-[5px] " + paleBox} />
        </label>
      ))}
    </div>
  );
}

const upDown = (
  <svg viewBox="0 0 8 20" className="h-[8px] w-[3px]" fill="none" stroke="#2699fb" strokeWidth="2" aria-hidden="true">
    <path d="M1 5l3-3 3 3M1 15l3 3 3-3" />
  </svg>
);

function Birthdate({ text, className = "" }) {
  return (
    <fieldset className={className}>
      <legend>{text}</legend>
      <div className="flex gap-[3px]">
        {["Month", "Day", "Year"].map((part) => (
          <div key={part} className={"flex h-[15px] w-[30px] items-center justify-between pr-[6px] pl-[5px] " + paleBox}>
            <input aria-label={part} defaultValue="00" inputMode="numeric" className="w-[12px] bg-transparent" />
            {upDown}
          </div>
        ))}
      </div>
    </fieldset>
  );
}

function Another({ value, className = "" }) {
  const id = useId();
  return (
    <div className={className}>
      <label htmlFor={id} className="block">Would you like to register another child?</label>
      <div className={"flex h-[15px] w-[30px] items-center justify-between pr-[6px] pl-[5px] " + paleBox}>
        <select id={id} defaultValue={value} className="w-[12px] appearance-none bg-transparent">
          <option>Yes</option>
          <option>No</option>
        </select>
        {upDown}
      </div>
    </div>
  );
}

function Bar({ children, className = "" }) {
  return <h2 className={"bg-[#bce0fd] pl-[6px] text-[4px] leading-[14px] text-[#2699fb] " + className}>{children}</h2>;
}

function VolunteerDesktop() {
  return (
    <Board label="Register to volunteer, desktop" className="text-[#2699fb]">
      <SiteHeader />
      <main className="pt-[25px] pr-[43px] pb-[8px] pl-[41px]">
        <h1 className={body + "text-[10px] leading-[13px]"}>Register to Volunteer</h1>
        <p className={body + "mt-[4px] text-[5px] leading-[6px] whitespace-nowrap"}>
          Please complete the form below for the child(ren) if you would like to register for an upcoming event. If you've already registered as a volunteer,
          <br />
          visit our Events page and register directly for any upcoming event.
        </p>
        <form className="mt-[13px] font-['Liberation_Sans',sans-serif] text-[4px] leading-[5px] text-[#a9d7fd]">
          <Bar>Parent/Guardian Information</Bar>
          <Pair labels={["Parent First Name", "Parent Last Name"]} className="mt-[9px]" />
          <Pair labels={["Email Address", "Phone Number"]} className="mt-[4px]" />
          <Bar className="mt-[9px]">Child Participant Information</Bar>
          <Pair labels={["Child Participant's First Name", "Child Participant's Last Name"]} className="mt-[9px]" />
          <Birthdate text="Child Participant's Birthdate" className="mt-[5px]" />
          <Another value="Yes" className="mt-[3px]" />
          <Pair labels={["Second Child Participant's First Name", "Second Child Participant's Last Name"]} className="mt-[7px]" />
          <Birthdate text="Second Child Participant's Birthdate" className="mt-[4px]" />
          <Another value="No" className="mt-[6px]" />
          <Bar className="mt-[6px]">Register for Upcoming Events</Bar>
          <div className="mt-[8px] flex flex-col gap-[3px] text-[#2699fb]">
            {[1, 2, 3, 4].map((n) => (
              <label key={n} className="flex items-center gap-[3px]">
                <input type="checkbox" className="size-[9px] appearance-none border border-[#d9edff]" />
                June 28, Intergenerational Art Class, 10 a.m. – 12 p.m.
              </label>
            ))}
            <label className={body + "flex items-center gap-[3px] text-[5px]"}>
              <input type="checkbox" className="size-[9px] appearance-none border border-[#d9edff]" />
              Would you like to receive our newsletter with information about upcoming events?
            </label>
          </div>
          <button type="button" className={body + "mt-[8px] h-[16px] w-[49px] rounded-[2px] border border-[#93cbfc] bg-[#2699fb] text-[5px] whitespace-nowrap text-white"}>
            Submit Registration
          </button>
        </form>
      </main>
      <WideFooter />
    </Board>
  );
}

/* ---------- canvas ---------- */

export default function App() {
  return (
    <div className="flex items-start gap-[89px] bg-white pt-[19px] pr-[45px] pb-[24px] pl-[29px] font-['Open_Sans',sans-serif] [text-rendering:geometricPrecision] [&_button]:[text-rendering:inherit] [&_input]:[text-rendering:inherit] [&_select]:[text-rendering:inherit]">
      <div className="grid min-w-0 flex-1 grid-cols-[400fr_250fr_120fr] items-start gap-[30px]">
        <div className="flex min-w-0 flex-col gap-[77px]">
          <HomeDesktop />
          <EventsDesktop />
        </div>
        <div className="flex min-w-0 flex-col gap-[82px] pt-[4px]">
          <HomeTablet />
          <EventsMobile />
        </div>
        <div className="min-w-0 pt-[4px]">
          <HomeMobile />
        </div>
      </div>
      <div className="grid min-w-0 flex-1 grid-cols-2 items-start gap-[30px]">
        <div className="flex min-w-0 flex-col gap-[45px] pt-[4px]">
          <DonateDesktop />
          <div className="grid grid-cols-[120fr_140fr_140fr] items-start">
            <DonateMobile />
            <div className="ml-[20px] flex min-w-0 flex-col gap-[30px]">
              <BillingMobile />
              <ReviewMobile />
            </div>
            <div className="ml-[30px] flex min-w-0 flex-col gap-[30px]">
              <CardMobile />
              <ThanksMobile />
            </div>
          </div>
        </div>
        <div className="flex min-w-0 flex-col gap-[29px] pt-[4px]">
          <SubmitDonationDesktop />
          <ReviewDesktop />
          <ThanksDesktop />
          <div className="-mr-[10px] mt-[29px] ml-[10px]">
            <VolunteerDesktop />
          </div>
        </div>
      </div>
    </div>
  );
}
